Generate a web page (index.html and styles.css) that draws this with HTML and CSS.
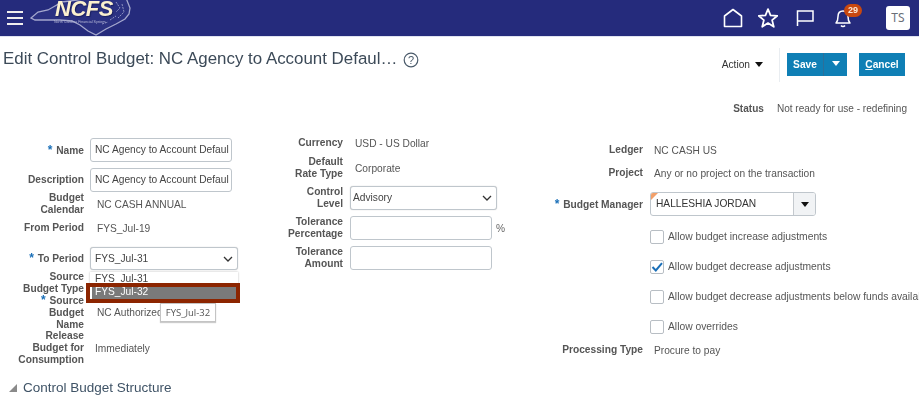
FILE: index.html
```html
<!DOCTYPE html>
<html lang="en">
<head>
<meta charset="utf-8">
<title>Edit Control Budget</title>
<link rel="stylesheet" href="styles.css">
</head>
<body>
<header class="topbar">
  <button class="hamburger" aria-label="Menu"><span></span><span></span><span></span></button>
  <div class="logo">
    <svg class="state" width="104" height="36" viewBox="0 0 104 36">
      <path d="M1 18 L8 12 L18 10 L25 6 L32 2 L62 -2 L96 -2 L100 8 L99 14 L95 19 L86 24 L76 29 L66 35 L58 31 L50 25 L42 21 L30 20 L16 20 L5 20 Z" fill="#2b3182" stroke="#a4a7cd" stroke-width="1.3"/>
      <path d="M86 2 L90 8 L86 12 M92 4 L94 12 L88 18 M80 20 L86 16 M72 24 L78 22" fill="none" stroke="#8f93c2" stroke-width="1" stroke-dasharray="2 1"/>
      <text x="24" y="22.5" class="tagline">North Carolina Financial System</text>
    </svg>
    <span class="logo-text">NCFS</span>
  </div>
  <nav class="top-icons">
    <svg class="ti-home" width="20" height="20" viewBox="0 0 20 20"><path d="M1.5 18.5 V8 L10 1.5 L18.5 8 V18.5 Z" fill="none" stroke="#fff" stroke-width="1.6" stroke-linejoin="round"/></svg>
    <svg class="ti-star" width="20" height="20" viewBox="1 1 18 18"><path d="M10 2 L12.3 7.6 L18.4 8 L13.7 11.9 L15.2 17.9 L10 14.6 L4.8 17.9 L6.3 11.9 L1.6 8 L7.7 7.6 Z" fill="none" stroke="#fff" stroke-width="1.6" stroke-linejoin="round"/></svg>
    <svg class="ti-flag" width="18" height="20" viewBox="0 0 18 20"><path d="M1.5 18 V3 H17 V13 H1.5" fill="none" stroke="#fff" stroke-width="1.5"/></svg>
    <div class="bell">
      <svg width="18" height="20" viewBox="0 0 18 20"><path d="M2 15 C4 13 4 11 4 8.5 C4 5 6 3 9 3 C12 3 14 5 14 8.5 C14 11 14 13 16 15 Z M7 17.5 C8 18.8 10 18.8 11 17.5" fill="none" stroke="#fff" stroke-width="1.5" stroke-linejoin="round"/></svg>
      <span class="badge">29</span>
    </div>
    <div class="avatar">TS</div>
  </nav>
</header>

<section class="titlebar">
  <h1>Edit Control Budget: NC Agency to Account Defaul…</h1>
  <svg class="help" width="16" height="16" viewBox="0 0 16 16"><circle cx="8" cy="8" r="6.8" fill="none" stroke="#4a5a6a" stroke-width="1.2"/><text x="8" y="11.5" text-anchor="middle" class="help-q">?</text></svg>
  <div class="actions">
    <span class="action-menu">Action <i class="caret"></i></span>
    <span class="divider"></span>
    <div class="btn save"><span class="save-label">Save</span><span class="save-drop"><i class="caret white"></i></span></div>
    <div class="btn cancel"><span><u>C</u>ancel</span></div>
  </div>
</section>

<div class="status"><b>Status</b><span>Not ready for use - redefining</span></div>

<main class="form">
  <div class="col col-a">
    <div class="row h-name"><label><em>*</em> Name</label><div class="input w142">NC Agency to Account Defaul</div></div>
    <div class="row h-desc"><label>Description</label><div class="input w142">NC Agency to Account Defaul</div></div>
    <div class="row h-cal"><label>Budget<br>Calendar</label><div class="val">NC CASH ANNUAL</div></div>
    <div class="row h-from"><label>From Period</label><div class="val">FYS_Jul-19</div></div>
    <div class="row h-to"><label><em>*</em> To Period</label>
      <div class="select w148">FYS_Jul-31<svg class="chev" width="10" height="6" viewBox="0 0 10 6"><path d="M1 1 L5 5 L9 1" fill="none" stroke="#333" stroke-width="1.3"/></svg></div>
    </div>
    <div class="row h-type"><label>Source<br>Budget Type</label></div>
    <div class="row h-sname"><label><em>*</em> Source<br>Budget<br>Name</label><div class="val">NC Authorized</div></div>
    <div class="row h-rel"><label>Release<br>Budget for<br>Consumption</label><div class="val val-tight">Immediately</div></div>

    <div class="dropdown">
      <div class="opt">FYS_Jul-31</div>
      <div class="opt-sel"><div class="opt-grey">FYS_Jul-32</div></div>
    </div>
    <div class="tooltip">FYS_Jul-32</div>
  </div>

  <div class="col col-b">
    <div class="row h-cur"><label>Currency</label><div class="val">USD - US Dollar</div></div>
    <div class="row h-rate"><label>Default<br>Rate Type</label><div class="val">Corporate</div></div>
    <div class="row h-lvl"><label>Control<br>Level</label>
      <div class="select w147 select-tight">Advisory<svg class="chev" width="10" height="6" viewBox="0 0 10 6"><path d="M1 1 L5 5 L9 1" fill="none" stroke="#333" stroke-width="1.3"/></svg></div>
    </div>
    <div class="row h-tol"><label>Tolerance<br>Percentage</label><div class="input w141"></div><span class="pct">%</span></div>
    <div class="row h-amt"><label>Tolerance<br>Amount</label><div class="input w141"></div></div>
  </div>

  <div class="col col-c">
    <div class="row h-led"><label>Ledger</label><div class="val">NC CASH US</div></div>
    <div class="row h-proj"><label>Project</label><div class="val">Any or no project on the transaction</div></div>
    <div class="row h-mgr"><label><em>*</em> Budget Manager</label>
      <div class="combo"><span class="flag"></span><span class="combo-text">HALLESHIA JORDAN</span><span class="combo-btn"><i class="caret"></i></span></div>
    </div>
    <div class="checks">
      <div class="check"><span class="box"></span>Allow budget increase adjustments</div>
      <div class="check"><span class="box"><svg width="14" height="14" viewBox="0 0 14 14"><path d="M2.5 7 L5.8 10.4 L12 3.2" fill="none" stroke="#1a6fb8" stroke-width="2"/></svg></span>Allow budget decrease adjustments</div>
      <div class="check"><span class="box"></span>Allow budget decrease adjustments below funds available</div>
      <div class="check"><span class="box"></span>Allow overrides</div>
    </div>
    <div class="row h-proc"><label>Processing Type</label><div class="val">Procure to pay</div></div>
  </div>
</main>

<section class="structure"><i class="tri"></i><h2>Control Budget Structure</h2></section>
</body>
</html>
```
FILE: styles.css
```css
* { box-sizing: border-box; }
html, body { margin: 0; padding: 0; }
body {
  width: 919px; height: 400px; overflow: hidden; background: #fff;
  font-family: "Liberation Sans", Arial, sans-serif; font-size: 10.2px; color: #555;
  position: relative; filter: blur(0.35px);
}
.topbar {
  height: 37px; background: #252b7c; display: flex; align-items: center; position: relative;
  border-bottom: 1px solid #dfe3f0;
}
.hamburger { background: none; border: 0; padding: 0; margin-left: 7px; width: 16px; display: flex; flex-direction: column; gap: 4px; margin-top: -1px; }
.hamburger span { display: block; height: 2px; background: #f1eeee; width: 16px; }
.logo { position: absolute; left: 30px; top: 0; width: 104px; height: 36px; overflow: hidden; }
.state { position: absolute; left: 0; top: 0; }
.tagline { font-size: 3.6px; fill: #b9bbd8; }
.logo-text {
  position: absolute; left: 25px; top: -6px; font-size: 22px; line-height: 30px; font-weight: bold; font-style: italic;
  color: #fbf0cf; letter-spacing: -0.5px; text-shadow: 1px 1px 1px #1a1f60;
}
.top-icons { margin-left: auto; display: flex; align-items: center; }
.ti-home { margin-right: 15px; }
.ti-star { margin-right: 18px; }
.ti-flag { margin-right: 20px; }
.bell { position: relative; width: 18px; height: 20px; margin-right: 34px; }
.bell svg { display: block; }
.badge {
  position: absolute; left: 10px; top: -4px; width: 18px; height: 13px; border-radius: 7px; background: #c8480f;
  color: #fbe8d8; font-size: 9px; font-weight: bold; line-height: 13px; text-align: center;
}
.avatar {
  width: 24px; height: 24px; border-radius: 3px; background: #fff; color: #6a6f78; font-size: 12px;
  line-height: 24px; text-align: center; margin-right: 9px; font-family: "Noto Sans", sans-serif;
}

.titlebar { height: 44px; display: flex; align-items: center; padding-left: 3px; position: relative; }
h1 { margin: 0; font-size: 16.9px; font-weight: normal; color: #3c4a58; white-space: nowrap; }
.help { margin-left: 6px; margin-top: 1px; }
.help-q { font-size: 11px; fill: #4a5a6a; font-family: "Liberation Sans", sans-serif; }
.actions { margin-left: auto; display: flex; align-items: center; height: 24px; margin-right: 14px; margin-top: 11px; }
.action-menu { color: #333; display: flex; align-items: center; gap: 5px; margin-right: 16px; }
.caret { display: inline-block; width: 0; height: 0; border-left: 4px solid transparent; border-right: 4px solid transparent; border-top: 5px solid #111; }
.caret.white { border-top-color: #fff; }
.divider { width: 1px; height: 34px; background: #e9edf1; margin-right: 7px; }
.btn { background: #0f7fb5; color: #fff; font-weight: bold; height: 23px; display: flex; align-items: center; justify-content: center; }
.save { width: 60px; }
.save-label { width: 37px; text-align: center; border-right: 1px solid #2c6f99; height: 100%; line-height: 23px; }
.save-drop { flex: 1; display: flex; align-items: center; justify-content: center; padding-bottom: 3px; }
.cancel { width: 46px; margin-left: 12px; }

.status { display: flex; justify-content: flex-end; padding-right: 12px; gap: 13px; height: 19px; margin-top: 20px; line-height: 15px; font-size: 10.05px; }
.status b { color: #555; }

.form { position: relative; height: 253px; margin-top: 18px; display: flex; align-items: flex-start; }
.col { position: relative; flex: none; }
.col-a { width: 238px; }
.col-b { width: 270px; margin-left: 27px; }
.col-c { width: 381px; margin-left: 4px; }

.row { display: flex; align-items: center; }
label { flex: none; text-align: right; font-weight: bold; line-height: 12px; color: #555; }
label em { color: #1a6fb8; font-style: normal; font-size: 12px; margin-right: 1px; }
.col-a label { width: 84px; margin-right: 6px; }
.col-b label { width: 78px; margin-right: 7px; }
.col-c label { width: 104px; margin-right: 7px; }
.val { color: #555; padding-left: 7px; white-space: nowrap; }
.val-tight { padding-left: 5px; }
.col-b .val { padding-left: 5px; }
.col-c .val { padding-left: 4px; }
.input, .select, .combo { height: 24px; border: 1px solid #bfc6cc; border-radius: 3px; background: #fff; color: #444; line-height: 22px; padding-left: 4px; white-space: nowrap; overflow: hidden; position: relative; }
.w142 { width: 142px; }
.w141 { width: 142px; }
.w148 { width: 148px; }
.w147 { width: 147px; }
.select { box-shadow: 0 0 1px #bbb; }
.select-tight { padding-left: 2px; }
.chev { position: absolute; right: 4px; top: 8px; }

.h-name { height: 24px; }
.h-desc { height: 24px; margin-top: 6px; }
.h-cal { height: 24px; }
.h-from { height: 24px; }
.h-to { height: 23px; margin-top: 7px; }
.h-to .select { height: 23px; }
.h-type { height: 24px; margin-top: 1px; }
.h-sname { height: 36px; margin-top: -1px; }
.h-rel { height: 36px; }

.h-cur { height: 14px; margin-top: -2px; }
.h-rate { height: 24px; margin-top: 6px; }
.h-lvl { height: 24px; margin-top: 6px; }
.h-tol { height: 24px; margin-top: 6px; }
.pct { margin-left: 4px; color: #666; }
.h-amt { height: 24px; margin-top: 6px; }

.h-led { height: 14px; margin-top: 5px; }
.h-proj { height: 14px; margin-top: 9px; }
.h-mgr { height: 24px; margin-top: 12px; }
.combo { width: 166px; padding: 0; display: flex; align-items: stretch; }
.combo-text { flex: 1; padding-left: 5px; color: #333; }
.combo-btn { width: 22px; background: #f1f3f5; border-left: 1px solid #c4c9ce; display: flex; align-items: center; justify-content: center; }
.flag { position: absolute; left: 0; top: 0; width: 0; height: 0; border-top: 7px solid #f2a06a; border-right: 7px solid transparent; }
.checks { margin-left: 111px; margin-top: 13px; display: flex; flex-direction: column; gap: 15px; white-space: nowrap; width: 269px; overflow: hidden; font-size: 10.3px; }
.check { display: flex; align-items: center; height: 15px; gap: 4px; color: #555; }
.box { flex: none; width: 14px; height: 14px; border: 1px solid #b8bec4; border-radius: 2px; background: #fff; position: relative; }
.box svg { position: absolute; left: -1px; top: -1px; }
.h-proc { height: 14px; margin-top: 9px; }

.dropdown { position: absolute; left: 90px; top: 134px; width: 148px; height: 28px; background: #fff; box-shadow: 0 0 2px #bbb; z-index: 2; color: #444; }
.opt { padding-left: 5px; height: 13px; line-height: 13px; }
.opt-sel { position: absolute; left: -4px; top: 11px; width: 154px; height: 20px; border: 4px solid #8c2500; background: #fff; padding-left: 2px; }
.opt-grey { background: #7a7a7a; color: #fff; height: 12px; line-height: 10px; padding-left: 3px; }
.tooltip { position: absolute; left: 160px; top: 165px; width: 56px; height: 19px; border: 1px solid #c4c4c4; background: #fff; color: #555; font-size: 9.5px; line-height: 17px; text-align: center; z-index: 3; font-family: "Open Sans", sans-serif; box-shadow: 0 1px 1px #ccc; }

.structure { position: absolute; left: 9px; top: 380px; display: flex; align-items: center; gap: 6px; height: 15px; }
.tri { width: 0; height: 0; border-bottom: 8px solid #8a8a8a; border-left: 8px solid transparent; }
h2 { margin: 0; font-size: 13.5px; font-weight: normal; color: #3f5366; white-space: nowrap; }
```
